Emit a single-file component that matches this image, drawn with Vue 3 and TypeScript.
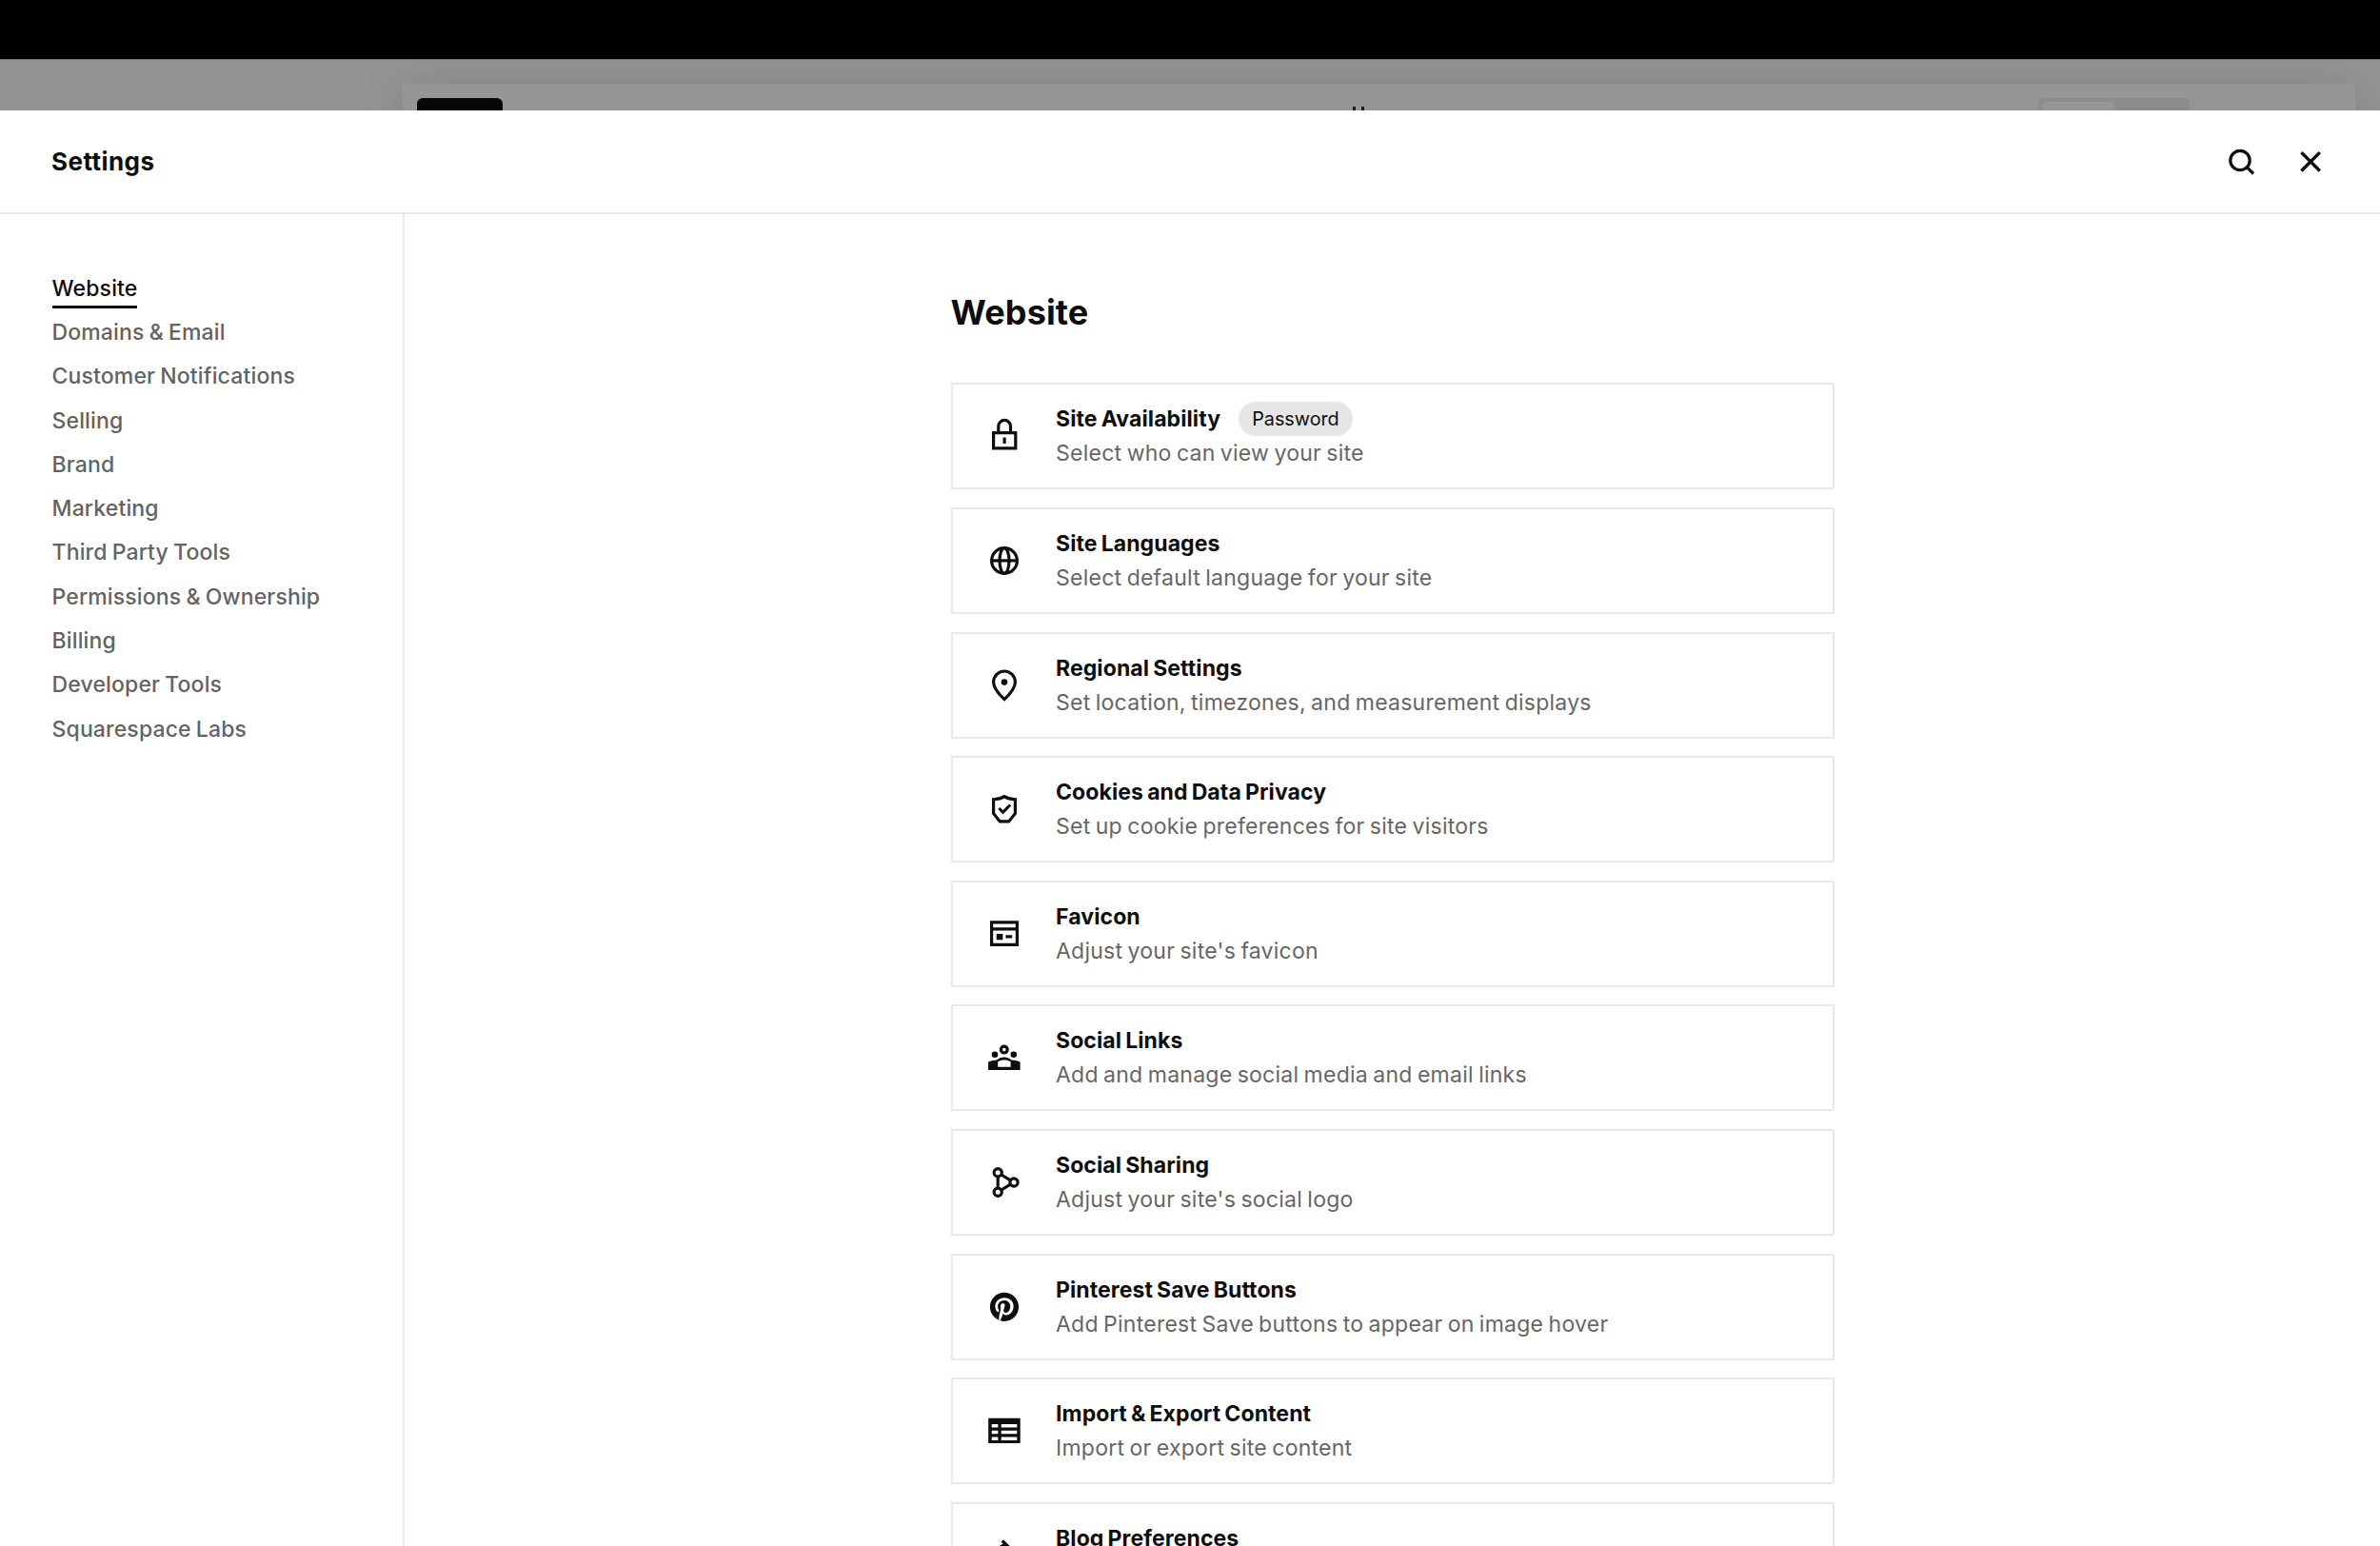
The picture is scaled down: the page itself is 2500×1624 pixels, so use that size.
<script setup lang="ts">
import { ref } from 'vue'

type IconName =
  | 'lock' | 'globe' | 'pin' | 'shield' | 'favicon'
  | 'people' | 'share' | 'pinterest' | 'table' | 'pencil'

interface Setting {
  title: string
  description?: string
  icon: IconName
  badge?: string
}

const sections: string[] = [
  'Website',
  'Domains & Email',
  'Customer Notifications',
  'Selling',
  'Brand',
  'Marketing',
  'Third Party Tools',
  'Permissions & Ownership',
  'Billing',
  'Developer Tools',
  'Squarespace Labs',
]

const active = ref('Website')

const settings: Setting[] = [
  { icon: 'lock', title: 'Site Availability', description: 'Select who can view your site', badge: 'Password' },
  { icon: 'globe', title: 'Site Languages', description: 'Select default language for your site' },
  { icon: 'pin', title: 'Regional Settings', description: 'Set location, timezones, and measurement displays' },
  { icon: 'shield', title: 'Cookies and Data Privacy', description: 'Set up cookie preferences for site visitors' },
  { icon: 'favicon', title: 'Favicon', description: "Adjust your site's favicon" },
  { icon: 'people', title: 'Social Links', description: 'Add and manage social media and email links' },
  { icon: 'share', title: 'Social Sharing', description: "Adjust your site's social logo" },
  { icon: 'pinterest', title: 'Pinterest Save Buttons', description: 'Add Pinterest Save buttons to appear on image hover' },
  { icon: 'table', title: 'Import & Export Content', description: 'Import or export site content' },
  { icon: 'pencil', title: 'Blog Preferences' },
]
</script>

<template>
  <div class="page">
    <div class="topbar" />

    <!-- Dimmed editor behind the sheet -->
    <div class="backdrop" aria-hidden="true">
      <div class="preview">
        <div class="preview-button" />
        <div class="preview-marks"><i /><i /></div>
        <div class="preview-toggle"><div class="preview-toggle-on" /></div>
      </div>
    </div>

    <section class="sheet">
      <header class="header">
        <h1 class="header-title">Settings</h1>
        <div class="header-actions">
          <button class="icon-button" aria-label="Search">
            <svg class="icon" viewBox="0 0 40 40" fill="none" stroke="currentColor" stroke-width="3.2">
              <circle cx="18" cy="18.5" r="10.2" />
              <path d="M25.2 25.7 32 32.5" />
            </svg>
          </button>
          <button class="icon-button" aria-label="Close">
            <svg class="icon" viewBox="0 0 40 40" fill="none" stroke="currentColor" stroke-width="3.4">
              <path d="M10.4 10.1 29.8 29.5M29.8 10.1 10.4 29.5" />
            </svg>
          </button>
        </div>
      </header>

      <div class="body">
        <nav class="sidebar">
          <a
            v-for="section in sections"
            :key="section"
            class="nav-item"
            :class="{ 'is-active': section === active }"
            @click="active = section"
          >
            <span class="nav-label">{{ section }}</span>
          </a>
        </nav>

        <main class="content">
          <div class="column">
            <h2 class="title">{{ active }}</h2>
            <div class="cards">
              <article v-for="item in settings" :key="item.title" class="card">
                <svg class="icon" viewBox="0 0 40 40" fill="none" stroke="currentColor" stroke-width="3.2">
                  <template v-if="item.icon === 'lock'">
                    <path d="M8.6 16.6h23.2v16.2H8.6zM13.8 16.6v-6.8a6.35 6.35 0 0 1 12.7 0v6.8" />
                    <path d="M20.1 21.5v6.4" />
                  </template>
                  <template v-else-if="item.icon === 'globe'">
                    <circle cx="20" cy="20" r="13.4" />
                    <ellipse cx="20" cy="20" rx="5" ry="13.4" />
                    <path d="M6.6 19.9h26.8" />
                  </template>
                  <template v-else-if="item.icon === 'pin'">
                    <path d="M20 34.6C16.6 31.4 8.6 23.6 8.6 16.4a11.4 11.4 0 0 1 22.8 0c0 7.2-8 15-11.4 18.2z" />
                    <circle cx="20" cy="16.6" r="3.3" fill="currentColor" stroke="none" />
                  </template>
                  <template v-else-if="item.icon === 'shield'">
                    <path d="M20 6.6c3 1.9 7 3 11.4 3.2v14.6l-6.7 8.5h-9.4l-6.7-8.5V9.8C13 9.6 17 8.5 20 6.6z" />
                    <path d="m14.4 19 4.1 4.3 7.6-7.8" stroke-width="3" />
                  </template>
                  <template v-else-if="item.icon === 'favicon'">
                    <path d="M6.6 7.9h26.8v23.4H6.6zM6.6 14.8h26.8" />
                    <path d="M11.7 19.9h6.6v6.4h-6.6zM21.4 21.2h6.8v3.4h-6.8z" fill="currentColor" stroke="none" />
                  </template>
                  <template v-else-if="item.icon === 'people'">
                    <circle cx="19.8" cy="11.6" r="3.4" />
                    <circle cx="10" cy="16.7" r="3.3" fill="currentColor" stroke="none" />
                    <circle cx="29.8" cy="16.7" r="3.3" fill="currentColor" stroke="none" />
                    <path
                      d="M3.1 33V24.5C6 23.3 9 22.8 12 22.6c2.2-2.2 5-3.2 7.8-3.2s5.6 1 7.8 3.2c3 .2 6 .7 9 1.9V33zM13.2 29.8H26.6V24.2c-2-1.2-4.2-1.7-6.7-1.7s-4.700.5-6.700 1.700z"
                      fill="currentColor"
                      fill-rule="evenodd"
                      stroke="none"
                    />
                  </template>
                  <template v-else-if="item.icon === 'share'">
                    <circle cx="13.2" cy="9.8" r="4.1" />
                    <circle cx="13.2" cy="30.2" r="4.1" />
                    <circle cx="30" cy="20" r="4.1" />
                    <path d="M13.2 13.9v12.2M16.8 12l9.6 5.8M16.8 28l9.6-5.8" />
                  </template>
                  <path
                    v-else-if="item.icon === 'pinterest'"
                    transform="translate(4.9 4.7) scale(1.258)"
                    d="M12 0C5.373 0 0 5.373 0 12c0 5.084 3.163 9.426 7.627 11.174-.105-.949-.2-2.405.042-3.441.218-.937 1.407-5.965 1.407-5.965s-.359-.719-.359-1.782c0-1.668.967-2.914 2.171-2.914 1.023 0 1.518.769 1.518 1.69 0 1.029-.655 2.568-.994 3.995-.283 1.194.599 2.169 1.777 2.169 2.133 0 3.772-2.249 3.772-5.495 0-2.873-2.064-4.882-5.012-4.882-3.414 0-5.418 2.561-5.418 5.207 0 1.031.397 2.138.893 2.738a.36.36 0 0 1 .083.345l-.333 1.36c-.053.22-.174.267-.402.161-1.499-.698-2.436-2.889-2.436-4.649 0-3.785 2.75-7.262 7.929-7.262 4.163 0 7.398 2.967 7.398 6.931 0 4.136-2.607 7.464-6.227 7.464-1.216 0-2.359-.631-2.75-1.378l-.748 2.853c-.271 1.043-1.002 2.35-1.492 3.146C9.57 23.812 10.763 24 12 24c6.627 0 12-5.373 12-12S18.627 0 12 0z"
                    fill="currentColor"
                    stroke="none"
                  />
                  <path
                    v-else-if="item.icon === 'table'"
                    d="M3.2 6.7H36.7V33H3.2zM6.7 12.9v3.6h6.7v-3.6zM16.7 12.9v3.6h16.6v-3.6zM6.7 19.7v3.6h6.7v-3.6zM16.7 19.7v3.6h16.6v-3.6zM6.7 26.5v3.4h6.7v-3.4zM16.7 26.5v3.4h16.6v-3.4z"
                    fill="currentColor"
                    fill-rule="evenodd"
                    stroke="none"
                  />
                  <path
                    v-else
                    d="M19 3.3 36 20.3 30 30 10 34.5 5 29.5 15 9.7 18.6 7.7 16.6 5.7z"
                    fill="currentColor"
                    stroke="none"
                  />
                </svg>
                <div class="card-text">
                  <div class="card-head">
                    <h3 class="card-title">{{ item.title }}</h3>
                    <span v-if="item.badge" class="badge">{{ item.badge }}</span>
                  </div>
                  <p v-if="item.description" class="card-description">{{ item.description }}</p>
                </div>
              </article>
            </div>
          </div>
        </main>
      </div>
    </section>
  </div>
</template>

<style>
body {
  margin: 0;
  background: #fff;
}
</style>

<style scoped>
.page {
  display: flex;
  flex-direction: column;
  width: 100%;
  height: 100vh;
  overflow: hidden;
  font-family: Inter, "Liberation Sans", sans-serif;
  color: #0e0e0e;
}

h1, h2, h3, p { margin: 0; }

.topbar {
  flex: none;
  height: 62px;
  background: #000;
}

.backdrop {
  flex: none;
  box-sizing: border-box;
  height: 54px;
  padding: 25px 26px 0 423px;
  overflow: hidden;
  border-top: 1px solid #787878;
  background: #949494;
}

.preview {
  display: grid;
  grid-template-columns: 90px 1fr 333px;
  height: 90px;
  padding: 15px 0 0 15px;
  background: #969696;
  box-shadow: 0 6px 48px rgb(0 0 0 / 0.14);
}

.preview-button {
  height: 40px;
  border-radius: 6px;
  background: #080808;
}

.preview-marks {
  display: flex;
  gap: 6px;
  padding: 9px 0 0 893px;
}

.preview-marks i {
  width: 3px;
  height: 16px;
  background: #1c1c1c;
}

.preview-toggle {
  box-sizing: border-box;
  width: 159px;
  height: 40px;
  padding: 4px;
  border-radius: 6px;
  background: #8c8c8c;
}

.preview-toggle-on {
  width: 76px;
  height: 32px;
  border-radius: 4px;
  background: #969696;
}

.sheet {
  display: flex;
  flex: 1;
  flex-direction: column;
  min-height: 0;
  background: #fff;
}

.header {
  display: flex;
  flex: none;
  align-items: center;
  justify-content: space-between;
  height: 107px;
  padding: 0 53px 0 54px;
  border-bottom: 2px solid #e9e9e9;
}

.header-title {
  font-size: 26px;
  font-weight: 650;
  line-height: 40px;
  letter-spacing: 0.45px;
}

.header-actions {
  display: flex;
  gap: 32px;
}

.icon-button {
  display: flex;
  padding: 0;
  border: 0;
  background: none;
  color: inherit;
}

.icon {
  flex: none;
  width: 40px;
  height: 40px;
}

.body {
  display: flex;
  flex: 1;
  min-height: 0;
}

.sidebar {
  box-sizing: border-box;
  flex: none;
  width: 425px;
  padding: 54.7px 0 0 54.5px;
  border-right: 2px solid #e9e9e9;
}

.nav-item {
  display: flex;
  align-items: flex-start;
  height: 46.3px;
  color: #636363;
  font-size: 23px;
  font-weight: 500;
  letter-spacing: 0.15px;
  word-spacing: -1.2px;
}

.nav-label {
  padding-top: 5px;
  border-bottom: 3px solid transparent;
  line-height: 36px;
  white-space: nowrap;
}

.is-active { color: #0e0e0e; }
.is-active .nav-label { border-color: #0e0e0e; }

.content {
  display: flex;
  flex: 1;
  justify-content: center;
  min-width: 0;
  overflow: hidden;
}

.column {
  width: 928px;
  padding-top: 79.5px;
}

.title {
  font-size: 36px;
  font-weight: 650;
  line-height: 46px;
  letter-spacing: 0.15px;
}

.cards {
  display: flex;
  flex-direction: column;
  gap: 18.63px;
  margin-top: 51.8px;
}

.card {
  box-sizing: border-box;
  display: flex;
  flex: none;
  align-items: center;
  gap: 34.5px;
  height: 112px;
  padding-left: 34px;
  border: 2px solid #e9e9e9;
}

.card-text {
  height: 72px;
}

.card-head {
  display: flex;
  align-items: center;
  gap: 19px;
  height: 36px;
}

.card-title {
  font-size: 23px;
  font-weight: 650;
  line-height: 36px;
  letter-spacing: 0.1px;
  word-spacing: -1.5px;
}

.badge {
  padding: 0 14px;
  border-radius: 18px;
  background: #e6e6e6;
  font-size: 19.8px;
  line-height: 36px;
}

.card-description {
  color: #666;
  font-size: 23px;
  line-height: 36px;
  letter-spacing: 0.25px;
  word-spacing: -1.4px;
}
</style>
